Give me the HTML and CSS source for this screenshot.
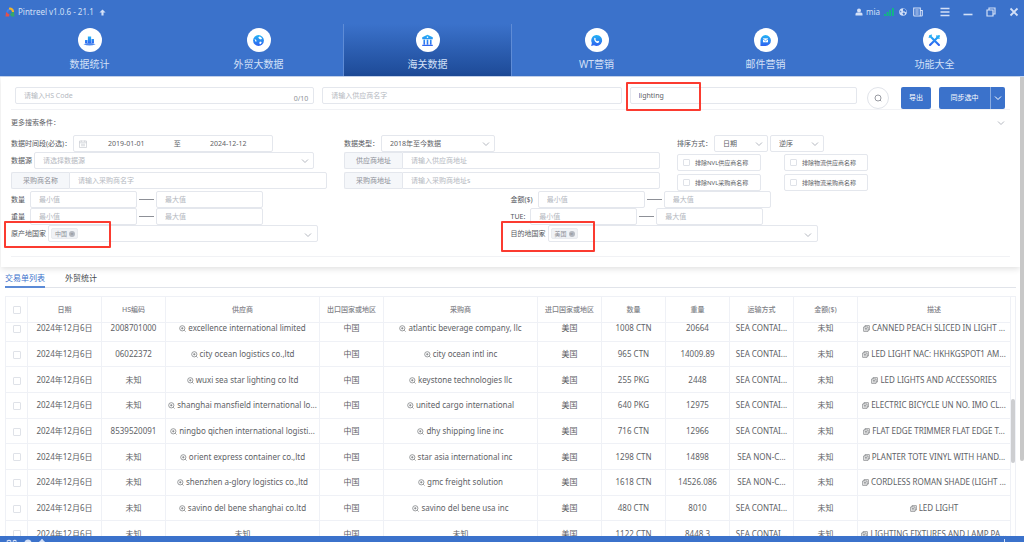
FILE: index.html
```html
<!DOCTYPE html>
<html lang="zh-CN">
<head>
<meta charset="utf-8">
<title>Pintreel v1.0.6 - 21.1</title>
<link rel="stylesheet" href="styles.css">
</head>
<body>
<svg class="defs" aria-hidden="true">
  <defs>
    <linearGradient id="blue" x1="0" y1="0" x2="0" y2="1"><stop offset="0" stop-color="#23b3f5"/><stop offset="1" stop-color="#2f62f0"/></linearGradient>
    <symbol id="chev" viewBox="0 0 8 8"><path d="M1 2.5 4 5.5 7 2.5" fill="none" stroke="currentColor" stroke-width="1"/></symbol>
    <symbol id="zoom" viewBox="0 0 16 16"><g fill="none" stroke="currentColor" stroke-width="1.4"><circle cx="7.5" cy="7.5" r="6"/><path d="M12 12l3 3M4.8 7.5h5.4M7.5 4.8v5.4"/></g></symbol>
    <symbol id="copy" viewBox="0 0 16 16"><g fill="none" stroke="currentColor" stroke-width="1.4"><path d="M1.5 4.5h10v10h-10zM4.500 4.500v-3h10v10h-3M4 8h5M4 11h5"/></g></symbol>
    <symbol id="globe" viewBox="0 0 16 16"><circle cx="8" cy="8" r="7.500" fill="currentColor"/><path class="land" d="M8 1.500l3-.3 3 2.800 1 3-2.500 1.500-1.500-2-2 .5-1-2zM9 9l3 1-1 3.500-2 1-1-2.500-1.500-1.500zM2 5l2 1 1 2-2 1z"/></symbol>
  </defs>
</svg>
<header class="top">
  <div class="titlebar">
    <svg class="logo" viewBox="0 0 20 20"><path d="M3 10A7 7 0 0 1 10 3l1 4-5 5z" fill="#3f7ff0"/><path d="M8 1.500A8 8 0 0 1 18 10h-4.500A5 5 0 0 0 8 5z" fill="#f3b52b"/><path d="M13.500 10H18l1 9h-6l-3-4z" fill="#35a86a"/><path d="M2 10l4 3 3 2-1 4H1z" fill="#e5504a"/><circle cx="10" cy="10" r="3.500" fill="#3b72cb"/></svg>
    <span class="title">Pintreel v1.0.6 - 21.1</span>
    <svg class="up" viewBox="0 0 8 8"><path d="M4 .5 7.500 4H5.200v3.500H2.800V4H.5z" fill="currentColor"/></svg>
    <div class="tools">
      <svg class="i8" viewBox="0 0 16 16"><circle cx="8" cy="5" r="4" fill="currentColor"/><path d="M1 15v-3q0-3 3-3h8q3 0 3 3v3z" fill="currentColor"/></svg>
      <span class="user">mia</span>
      <svg class="signal" viewBox="0 0 10 8"><path d="M0 6h1.800v2H0zM2.600 4h1.800v4H2.600zM5.200 2H7v6H5.200zM8 0h1.800v8H8z" fill="#10b981"/></svg>
      <svg class="i8 world"><use href="#globe"/></svg>
      <svg class="i10" viewBox="0 0 10 10"><path d="M.7 1h6.600v8H1.500Q.7 9 .7 8zM7.300 3.500h2V8.200q0 .8-1 .8H6.500M2.300 3h3.400M2.300 5h3.400M2.300 7h3.400" fill="none" stroke="currentColor" stroke-width="1.100"/></svg>
      <button class="win menu" aria-label="菜单"><svg viewBox="0 0 10 10"><path d="M.5 1.500h9M.5 5h9M.5 8.500h9" stroke="currentColor" stroke-width="1.400"/></svg></button>
      <button class="win" aria-label="最小化"><svg viewBox="0 0 10 10"><path d="M.5 7.500h9" stroke="currentColor" stroke-width="1.600"/></svg></button>
      <button class="win" aria-label="最大化"><svg viewBox="0 0 10 10"><path d="M1 3h6v6H1zM3 3V1h6v6H7" fill="none" stroke="currentColor" stroke-width="1.200"/></svg></button>
      <button class="win" aria-label="关闭"><svg viewBox="0 0 10 10"><path d="M1.500 1.500l7 7M8.500 1.500l-7 7" stroke="currentColor" stroke-width="1.800"/></svg></button>
    </div>
  </div>
  <nav class="nav">
    <a href="#stats"><span class="disc"><svg viewBox="0 0 16 16"><path d="M2.500 7.500h3v4h-3zM6 3h4v8.500H6zM10.500 6h3v5.500h-3z" fill="url(#blue)"/><path d="M.5 12.500Q8 9.500 15.500 12.500 8 15.500.5 12.500z" fill="#4b86ee"/></svg></span>数据统计</a>
    <a href="#trade"><span class="disc globe"><svg viewBox="-1 -1 18 18"><circle cx="8" cy="8" r="7.500" fill="url(#blue)"/><path d="M8 3l2-.5 3 2.500-1.500 1.500-2-.5-1.500-1.500zM10 9.500l2.500.5-1 2.500-1.500.8-1-2zM2.500 6l2 1 1 2-1.500.8z" fill="#fff"/></svg></span>外贸大数据</a>
    <a href="#customs" class="on"><span class="disc"><svg viewBox="0 0 16 16"><path d="M8 .8 14.500 4v2.500h-13V4zM3 7h2v6H3zM7 7h2v6H7zM11 7h2v6h-2zM1.500 13.200h13v1.600h-13z" fill="url(#blue)"/><circle cx="8" cy="4" r="1" fill="#fff"/></svg></span>海关数据</a>
    <a href="#wt"><span class="disc"><svg viewBox="-1 -1 18 18"><path d="M8 .5a7.500 7.500 0 1 1-3.500 14L.6 15.500l1-4A7.500 7.500 0 0 1 8 .5z" fill="url(#blue)"/><path d="M5 4.500q1-1 1.800.8c.5 1-.8 1 .2 2.200s1.800 1.800 2.500 1.200 1.200-.2 2 .5-.8 2.500-2.300 2.100C6.500 10.500 4 7.500 5 4.500z" fill="#fff"/></svg></span>WT营销</a>
    <a href="#mail"><span class="disc"><svg viewBox="-1 -1 18 18"><path d="M8 .5a7.500 7.500 0 1 1 0 15H1V8A7.500 7.500 0 0 1 8 .5z" fill="url(#blue)"/><path d="M4.500 5h7v5.500h-7z" fill="#fff"/><path d="M4.500 6 8 8.500 11.500 6" fill="none" stroke="#2f8af2"/></svg></span>邮件营销</a>
    <a href="#tools"><span class="disc"><svg viewBox="0 0 16 16"><path d="M2.500 2.500l11 11M13.500 2.500l-11 11" stroke="url(#blue)" stroke-width="2.600" stroke-linecap="round"/><path d="M1 4.500 4.500 1M11 1.500v3.500h3.500" stroke="#23a8f5" stroke-width="1.600" fill="none"/></svg></span>功能大全</a>
  </nav>
</header>
<main class="main">
  <form class="panel">
    <div class="search">
      <div class="cell wide"><input class="box" aria-label="HS Code" placeholder="请输入HS Code"><span class="count">0/10</span></div>
      <div class="cell wide"><input class="box" aria-label="供应商名字" placeholder="请输入供应商名字"></div>
      <div class="cell mid"><input class="box" aria-label="采购关键词" value="lighting"><i class="mark mark-kw"></i></div>
      <button type="button" class="round" aria-label="搜索"><svg viewBox="0 0 16 16"><g fill="none" stroke="currentColor" stroke-width="1.800"><circle cx="8" cy="8" r="6"/><path d="M12 12l2.500 2.500"/></g></svg></button>
      <button type="button" class="btn export">导出</button>
      <div class="split"><button type="button" class="btn">同步选中</button><button type="button" class="btn more" aria-label="更多操作"><svg class="chev"><use href="#chev"/></svg></button></div>
    </div>
    <div class="morebar"><span>更多搜索条件：</span><svg class="chev"><use href="#chev"/></svg></div>
    <div class="three">
      <div class="col">
        <div class="field"><label for="from" class="gap">数据时间段(必选)：</label><div class="box dates"><svg viewBox="0 0 16 16"><path d="M1 2h14v13H1zM1 5.500h14M4.500 1v3M11.500 1v3M4 8.500h8M4 11.500h8" fill="none" stroke="currentColor"/></svg><input id="from" value="2019-01-01"><span>至</span><input aria-label="结束日期" value="2024-12-12"></div></div>
        <div class="field"><label for="src">数据源</label><div class="sel src"><select id="src" class="box dim"><option>请选择数据源</option></select><svg class="chev"><use href="#chev"/></svg></div></div>
        <div class="field addon sp"><label for="buyer">采购商名称</label><input id="buyer" class="box" placeholder="请输入采购商名字"></div>
      </div>
      <div class="col">
        <div class="field"><label for="type" class="gap">数据类型：</label><div class="sel type"><select id="type" class="box"><option>2018年至今数据</option></select><svg class="chev"><use href="#chev"/></svg></div></div>
        <div class="field addon"><label for="sa">供应商地址</label><input id="sa" class="box" placeholder="请输入供应商地址"></div>
        <div class="field addon sp"><label for="ba">采购商地址</label><input id="ba" class="box" placeholder="请输入采购商地址s"></div>
      </div>
      <div class="col">
        <div class="field"><label for="sort" class="gap">排序方式：</label><div class="sel sort"><select id="sort" class="box"><option>日期</option></select><svg class="chev"><use href="#chev"/></svg></div><div class="sel sort"><select aria-label="顺序" class="box"><option>逆序</option></select><svg class="chev"><use href="#chev"/></svg></div></div>
        <div class="checks">
          <label class="box"><input type="checkbox">排除NVL供应商名称</label><label class="box"><input type="checkbox">排除物流供应商名称</label>
          <label class="box"><input type="checkbox">排除NVL采购商名称</label><label class="box"><input type="checkbox">排除物流采购商名称</label>
        </div>
      </div>
    </div>
    <div class="two">
      <div class="field"><label for="q1" class="rng">数量</label><input id="q1" class="box num" placeholder="最小值"><span class="dash"></span><input aria-label="数量最大值" class="box num" placeholder="最大值"></div>
      <div class="field"><label for="m1" class="rng">金额($)</label><input id="m1" class="box num" placeholder="最小值"><span class="dash"></span><input aria-label="金额最大值" class="box num" placeholder="最大值"></div>
      <div class="field"><label for="w1" class="rng">重量</label><input id="w1" class="box num" placeholder="最小值"><span class="dash"></span><input aria-label="重量最大值" class="box num" placeholder="最大值"></div>
      <div class="field"><label for="t1" class="rng">TUE:</label><input id="t1" class="box num" placeholder="最小值"><span class="dash"></span><input aria-label="TUE最大值" class="box num" placeholder="最大值"></div>
      <div class="field"><span class="lab">原产地国家</span><div class="box multi"><span class="tag">中国<button type="button" aria-label="移除中国">×</button></span><svg class="chev"><use href="#chev"/></svg></div><i class="mark mark-from"></i></div>
      <div class="field"><span class="lab">目的地国家</span><div class="box multi"><span class="tag">美国<button type="button" aria-label="移除美国">×</button></span><svg class="chev"><use href="#chev"/></svg></div><i class="mark mark-to"></i></div>
    </div>
    <hr>
  </form>
  <div class="tabs"><a href="#list" class="on">交易单列表</a><a href="#sum">外贸统计</a></div>
  <div class="grid">
    <table class="head">
      <colgroup><col class="c-ck"><col class="c-date"><col class="c-s"><col class="c-l"><col class="c-s"><col class="c-l"><col class="c-s"><col class="c-s"><col class="c-s"><col class="c-s"><col class="c-s"><col class="c-d"></colgroup>
      <thead><tr><th><input type="checkbox" aria-label="全选"></th><th>日期</th><th>HS编码</th><th>供应商</th><th>出口国家或地区</th><th>采购商</th><th>进口国家或地区</th><th>数量</th><th>重量</th><th>运输方式</th><th>金额($)</th><th>描述</th></tr></thead>
    </table>
    <div class="rows">
      <table class="body">
        <colgroup><col class="c-ck"><col class="c-date"><col class="c-s"><col class="c-l"><col class="c-s"><col class="c-l"><col class="c-s"><col class="c-s"><col class="c-s"><col class="c-s"><col class="c-s"><col class="c-d"></colgroup>
        <tbody>
        <tr><td><input type="checkbox" aria-label="选择"></td><td>2024年12月6日</td><td>2008701000</td><td><svg><use href="#zoom"/></svg>excellence international limited</td><td>中国</td><td><svg><use href="#zoom"/></svg>atlantic beverage company, llc</td><td>美国</td><td>1008 CTN</td><td>20664</td><td>SEA CONTAI...</td><td>未知</td><td><svg><use href="#copy"/></svg>CANNED PEACH SLICED IN LIGHT ...</td></tr>
        <tr><td><input type="checkbox" aria-label="选择"></td><td>2024年12月6日</td><td>06022372</td><td><svg><use href="#zoom"/></svg>city ocean logistics co.,ltd</td><td>中国</td><td><svg><use href="#zoom"/></svg>city ocean intl inc</td><td>美国</td><td>965 CTN</td><td>14009.89</td><td>SEA CONTAI...</td><td>未知</td><td><svg><use href="#copy"/></svg>LED LIGHT NAC: HKHKGSPOT1 AM...</td></tr>
        <tr><td><input type="checkbox" aria-label="选择"></td><td>2024年12月6日</td><td>未知</td><td><svg><use href="#zoom"/></svg>wuxi sea star lighting co ltd</td><td>中国</td><td><svg><use href="#zoom"/></svg>keystone technologies llc</td><td>美国</td><td>255 PKG</td><td>2448</td><td>SEA CONTAI...</td><td>未知</td><td><svg><use href="#copy"/></svg>LED LIGHTS AND ACCESSORIES</td></tr>
        <tr><td><input type="checkbox" aria-label="选择"></td><td>2024年12月6日</td><td>未知</td><td><svg><use href="#zoom"/></svg>shanghai mansfield international lo...</td><td>中国</td><td><svg><use href="#zoom"/></svg>united cargo international</td><td>美国</td><td>640 PKG</td><td>12975</td><td>SEA CONTAI...</td><td>未知</td><td><svg><use href="#copy"/></svg>ELECTRIC BICYCLE UN NO. IMO CL...</td></tr>
        <tr><td><input type="checkbox" aria-label="选择"></td><td>2024年12月6日</td><td>8539520091</td><td><svg><use href="#zoom"/></svg>ningbo qichen international logisti...</td><td>中国</td><td><svg><use href="#zoom"/></svg>dhy shipping line inc</td><td>美国</td><td>716 CTN</td><td>12966</td><td>SEA CONTAI...</td><td>未知</td><td><svg><use href="#copy"/></svg>FLAT EDGE TRIMMER FLAT EDGE T...</td></tr>
        <tr><td><input type="checkbox" aria-label="选择"></td><td>2024年12月6日</td><td>未知</td><td><svg><use href="#zoom"/></svg>orient express container co.,ltd</td><td>中国</td><td><svg><use href="#zoom"/></svg>star asia international inc</td><td>美国</td><td>1298 CTN</td><td>14898</td><td>SEA NON-C...</td><td>未知</td><td><svg><use href="#copy"/></svg>PLANTER TOTE VINYL WITH HAND...</td></tr>
        <tr><td><input type="checkbox" aria-label="选择"></td><td>2024年12月6日</td><td>未知</td><td><svg><use href="#zoom"/></svg>shenzhen a-glory logistics co.,ltd</td><td>中国</td><td><svg><use href="#zoom"/></svg>gmc freight solution</td><td>美国</td><td>1618 CTN</td><td>14526.086</td><td>SEA NON-C...</td><td>未知</td><td><svg><use href="#copy"/></svg>CORDLESS ROMAN SHADE (LIGHT ...</td></tr>
        <tr><td><input type="checkbox" aria-label="选择"></td><td>2024年12月6日</td><td>未知</td><td><svg><use href="#zoom"/></svg>savino del bene shanghai co.ltd</td><td>中国</td><td><svg><use href="#zoom"/></svg>savino del bene usa inc</td><td>美国</td><td>480 CTN</td><td>8010</td><td>SEA CONTAI...</td><td>未知</td><td><svg><use href="#copy"/></svg>LED LIGHT</td></tr>
        <tr><td><input type="checkbox" aria-label="选择"></td><td>2024年12月6日</td><td>未知</td><td>未知</td><td>中国</td><td>未知</td><td>美国</td><td>1122 CTN</td><td>8448.3</td><td>SEA CONTAI...</td><td>未知</td><td><svg><use href="#copy"/></svg>LIGHTING FIXTURES AND LAMP PA...</td></tr>
        </tbody>
      </table>
      <i class="thumb"></i>
    </div>
  </div>
  <i class="pagebar"></i>
</main>
<footer class="foot">
  <svg viewBox="0 0 16 10"><path d="M1 3q3-3 6 0M9 3q3-3 5 0" stroke="currentColor" stroke-width="1.500" fill="none"/></svg>
  <svg viewBox="0 0 8 8"><circle cx="4" cy="4" r="3.500" fill="currentColor"/></svg>
  <svg viewBox="0 0 8 8"><path d="M4 0v4M1 4l3-3 3 3" stroke="currentColor" stroke-width="1.500" fill="none"/></svg>
  <i></i>
</footer>
</body>
</html>
```
FILE: styles.css
```css
* { box-sizing: border-box; }
body {
  margin: 0;
  height: 100vh;
  display: flex;
  flex-direction: column;
  overflow: hidden;
  background: #fff;
  color: #606266;
  font: 7px/12px "Noto Sans", "Noto Sans CJK SC", sans-serif;
}
input, select, button { font: inherit; color: inherit; margin: 0; padding: 0; border: 0; background: none; }
input::placeholder { color: #b4b8c0; opacity: 1; }
a { color: inherit; text-decoration: none; }
svg { flex: none; }
.defs { position: absolute; width: 0; height: 0; }
.chev { width: 8px; height: 8px; color: #b4b8c0; }

.top { background: #3b72cb; color: #d3e0f7; flex: none; border-bottom: 1px solid #c6d6f0; }
.titlebar { display: flex; align-items: center; height: 24px; padding: 0 5px; font-size: 8px; }
.logo { width: 10px; height: 10px; margin-right: 3px; }
.up { width: 7px; height: 7px; margin-left: 5px; }
.tools { display: flex; align-items: center; margin-left: auto; }
.i8 { width: 8px; height: 8px; }
.i10 { width: 10px; height: 10px; margin: 0 17px 0 6px; }
.user { margin: 0 4px 0 3px; }
.signal { width: 10px; height: 8px; margin-right: 5px; }
.land { fill: #3b72cb; }
.win { display: flex; margin-left: 13px; }
.win.menu { margin-left: 0; }
.win svg { width: 10px; height: 10px; }
.nav { display: grid; grid-template-columns: repeat(6, 1fr); padding: 0 5px; }
.nav a { display: flex; flex-direction: column; align-items: center; gap: 4px; height: 52px; padding-top: 4px; font-size: 10px; line-height: 16px; }
.nav .on { background: linear-gradient(#3b72cb, #1d4a97); border: solid #5f8cd6; border-width: 0 1px; }
.disc { display: flex; align-items: center; justify-content: center; width: 24px; height: 24px; border-radius: 50%; background: #fff; }
.disc svg { width: 13px; height: 13px; }

.main { flex: 1; min-height: 0; display: flex; flex-direction: column; position: relative; padding: 0 4px 0 1px; }
.panel { flex: none; padding: 10px 10px 0; box-shadow: 0 2px 6px rgba(0, 0, 0, .12); }
.box { border: 1px solid #e4e7ed; border-radius: 2px; background: #fff; height: 17px; }
input.box { padding: 0 8px; min-width: 0; width: 100%; }
.search { display: flex; padding: 0 5px 0 4px; border-bottom: 1px solid #f1f2f5; height: 23px; }
.cell { position: relative; margin-right: 8px; display: flex; }
.wide { flex: 300; }
.mid { flex: 228; }
.count { position: absolute; right: 6px; bottom: 5px; line-height: 10px; color: #8d9097; }
.round { width: 22px; height: 22px; margin: 0 12px 0 2px; border: 1px solid #e1e4ea; border-radius: 50%; display: flex; align-items: center; justify-content: center; color: #8d9097; }
.round svg { width: 8px; height: 8px; }
.btn { height: 22px; background: #3b72cb; color: #fff; border-radius: 2px; }
.export { width: 30px; margin-right: 8px; }
.split { display: flex; width: 66px; }
.split .btn { flex: 1; border-radius: 2px 0 0 2px; }
.split .more { flex: none; width: 15px; border-radius: 0 2px 2px 0; display: flex; align-items: center; justify-content: center; border-left: 1px solid #89abe0; }
.more .chev { color: #fff; }
.morebar { display: flex; align-items: center; justify-content: space-between; padding-right: 5px; height: 25px; }
.three { display: grid; grid-template-columns: repeat(3, 1fr); }
.two { display: grid; grid-template-columns: 1fr 1fr; }
.field { display: flex; align-items: center; height: 17px; position: relative; }
.field label, .lab { flex: none; margin-right: 2px; color: #55585e; }
.field .rng { margin-right: 5px; }
.sp { margin-top: 3px; }
.dates { display: flex; align-items: center; width: 200px; padding: 0 5px; }
.dates svg { width: 8px; height: 8px; color: #b4b8c0; }
.dates input { width: 78px; text-align: center; min-width: 0; }
.dates span { flex: 1; text-align: center; }
.sel { position: relative; display: flex; }
.sel select { appearance: none; width: 100%; padding: 0 8px; }
.sel .chev, .multi .chev { position: absolute; right: 5px; top: 5px; }
.sel .dim { color: #b4b8c0; }
.src { width: 280px; }
.type { width: 114px; }
.sort { width: 54px; margin-right: 2px; }
.addon { width: 316px; }
.field.addon label { width: 58px; height: 17px; margin: 0; line-height: 15px; text-align: center; color: #8d9097; background: #f5f7fa; border: 1px solid #e4e7ed; border-right: 0; border-radius: 2px 0 0 2px; }
.addon .box { flex: 1; border-radius: 0 2px 2px 0; }
.checks { display: grid; grid-template-columns: 84px 84px; gap: 3px 23px; margin-top: 2px; }
.checks label { display: flex; align-items: center; gap: 5px; padding: 0 5px; font-size: 6px; white-space: nowrap; }
input[type="checkbox"] { appearance: none; width: 8px; height: 8px; border: 1px solid #dfe2e8; border-radius: 1px; background: #fff; flex: none; }
.checks input[type="checkbox"] { width: 7px; height: 7px; }
.field .num { width: 107px; flex: none; }
.dash { width: 15px; height: 1px; background: #8d9097; margin: 0 2px; }
.multi { position: relative; width: 270px; padding: 2px; display: flex; }
.tag { display: flex; align-items: center; gap: 2px; height: 11px; padding: 0 2px 0 3px; font-size: 6px; color: #8d9097; background: #f0f2f5; border: 1px solid #e9ebef; border-radius: 2px; }
.tag button { width: 6px; height: 6px; border-radius: 50%; background: #b4b8c0; color: #8d9097; line-height: 6px; text-align: center; }
.mark { position: absolute; border: 2px solid #fb3b30; border-radius: 1px; pointer-events: none; }
.mark-kw { left: -4px; top: -5px; width: 75px; height: 29px; }
.mark-from { left: -7px; top: -4px; width: 107px; height: 27px; }
.mark-to { left: -10px; top: -4px; width: 94px; height: 31px; }
.panel hr { border: 0; border-top: 1px solid #f1f2f5; margin: 14px 0 10px; }

.tabs { flex: none; display: flex; gap: 20px; margin: 5px 4px 8px; font-size: 8px; color: #44474c; border-bottom: 1px solid #e1e4ea; }
.tabs a { height: 16px; line-height: 12px; margin-bottom: -1px; }
.tabs .on { color: #3b72cb; border-bottom: 2px solid #5b8ad6; }
.grid { flex: 1; min-height: 0; display: flex; flex-direction: column; margin: 0 4px; border: solid #eff1f6; border-width: 1px 1px 0; }
.grid table { table-layout: fixed; border-collapse: separate; border-spacing: 0; width: 100%; }
.head, .rows { flex: none; padding-right: 4px; }
.head th { height: 26px; color: #7f8288; font-weight: 500; }
.rows { flex: 1; min-height: 0; overflow: hidden; position: relative; }
.body { height: 231px; margin-top: -7px; font-size: 8px; }
th, td { padding: 0; text-align: center; white-space: nowrap; border: solid #eff1f6; border-width: 0 1px 1px 0; }
td input, th input { vertical-align: middle; }
td svg { width: 7px; height: 7px; margin-right: 2px; vertical-align: -1px; }
.c-ck { width: 22px; }
.c-date { width: 74px; }
.c-s { width: 64px; }
.c-l { width: 154px; }
.c-d { width: 153px; }
.thumb { position: absolute; right: 0; top: 76px; width: 4px; height: 64px; border-radius: 2px; background: #cdced1; }
.pagebar { position: absolute; right: 0; top: 0; width: 4px; height: 384px; background: #c8c8c8; border-radius: 0 0 2px 2px; }
.foot { flex: none; display: flex; gap: 6px; height: 6px; padding: 3px 19px 0 6px; overflow: hidden; background: #3b72cb; color: #d3e0f7; }
.foot svg { height: 8px; width: 8px; }
.foot svg:first-child { width: 12px; }
.foot i { width: 1px; height: 6px; margin-left: auto; background: #d3e0f7; }
```
